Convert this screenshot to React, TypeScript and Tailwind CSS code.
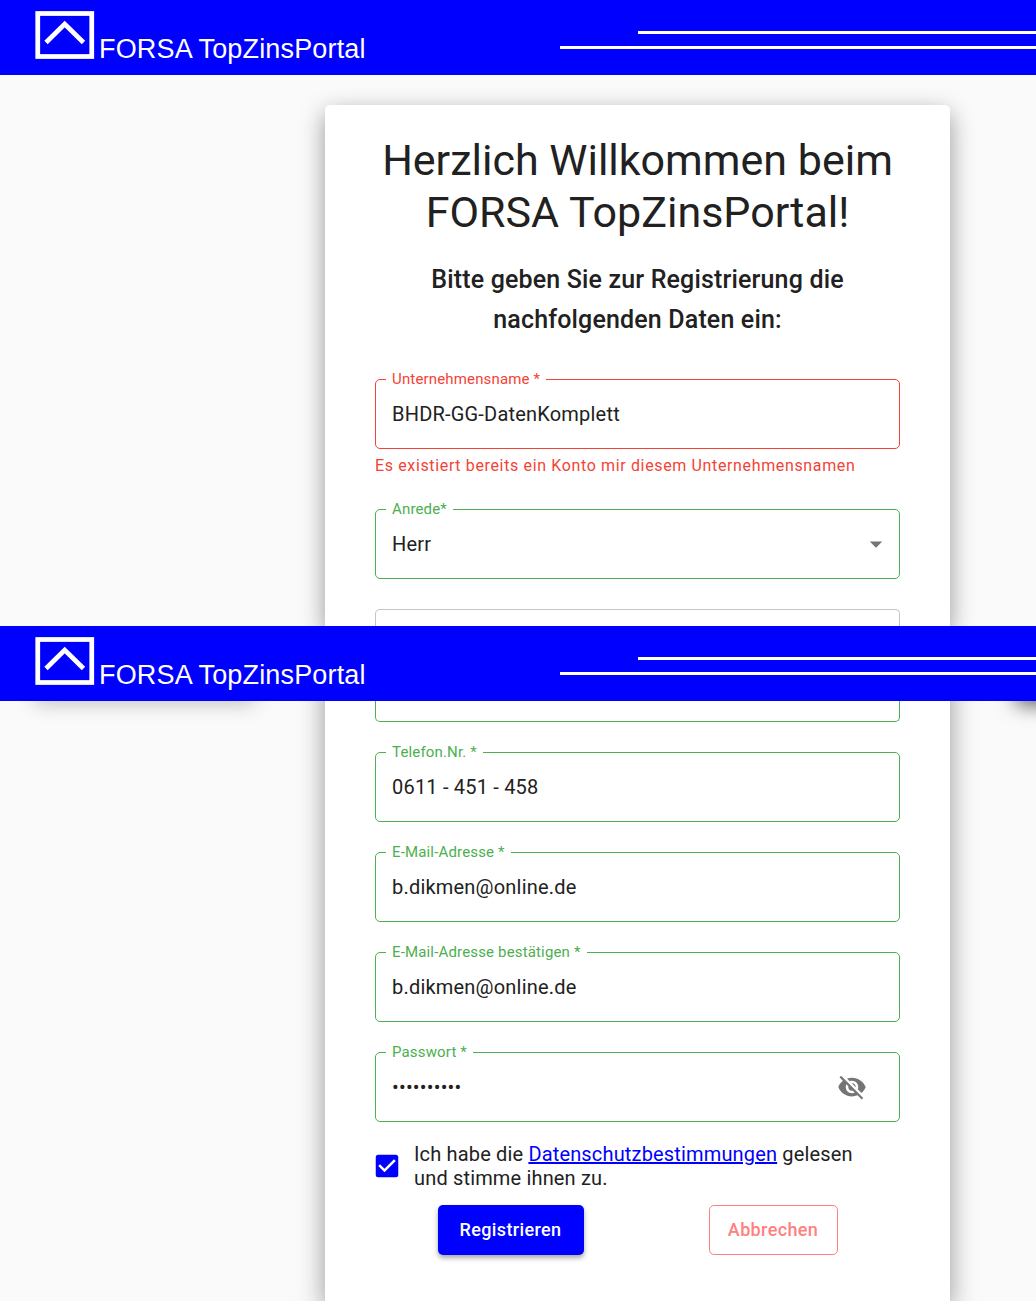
import { useState } from "react";
import type { ReactNode } from "react";
import { MdArrowDropDown, MdCheckBox, MdCheckBoxOutlineBlank, MdVisibility, MdVisibilityOff } from "react-icons/md";

function Header() {
  return (
    <header className="relative z-10 flex h-[75px] items-start justify-between bg-[#0000ff]">
      <div className="flex shrink-0 items-start pt-[11px] pl-[35px]">
        <svg width="60" height="49" viewBox="0 0 60 49" fill="none" stroke="#fff" aria-hidden="true">
          <rect x="2.75" y="2.5" width="54" height="43" strokeWidth="4.75" />
          <path d="M11 31.5 29.7 13 48.5 31.5" strokeWidth="4.75" />
        </svg>
        <span className="mt-[22px] ml-1 font-['Liberation_Sans',sans-serif] text-[27px] leading-8 text-white">
          FORSA TopZinsPortal
        </span>
      </div>
      <div className="flex w-[476px] flex-col items-end gap-3 pt-[31px]" aria-hidden="true">
        <div className="h-[3px] w-[398px] bg-white" />
        <div className="h-[3px] w-full bg-white" />
      </div>
    </header>
  );
}

type FieldProps = { id: string; label: string; invalid?: boolean; children: ReactNode };

function Field({ id, label, invalid = false, children }: FieldProps) {
  const tone = invalid ? "border-[#f44336] text-[#f44336]" : "border-[#4caf50] text-[#4caf50]";
  return (
    <fieldset className={`min-w-0 rounded-[5px] border px-[10px] pb-[9px] ${tone}`}>
      <legend className="px-[6px] text-[15px] leading-5">
        <label htmlFor={id}>{label}</label>
      </legend>
      <div className="relative flex h-[50px] items-center px-[6px] text-xl text-[#212121]">{children}</div>
    </fieldset>
  );
}

const inputStyle = "h-full w-full min-w-0 flex-1 bg-transparent tracking-[0.01em] outline-none";
const cardShadow = "shadow-[0_8px_25px_rgba(0,0,0,0.4)]";

export default function App() {
  const [visible, setVisible] = useState(false);
  const [accepted, setAccepted] = useState(true);

  return (
    <div className="min-h-screen bg-[#fafafa] font-[Roboto,sans-serif] tracking-[0.01em] text-[#212121]">
      <Header />
      <section className="overflow-hidden pt-[30px]">
        <div className={`mr-[86px] ml-[325px] rounded-t-[5px] bg-white px-[50px] pt-[29px] ${cardShadow}`}>
          <h1 className="text-center text-[43px] leading-[52px] tracking-normal">
            Herzlich Willkommen beim <br />
            FORSA TopZinsPortal!
          </h1>
          <h2 className="mt-[22px] px-8 text-center text-[25px] leading-10 font-medium">
            Bitte geben Sie zur Registrierung die nachfolgenden Daten ein:
          </h2>
          <div className="mt-[29px] flex flex-col gap-5">
            <div>
              <Field id="company" label="Unternehmensname *" invalid>
                <input id="company" className={inputStyle} defaultValue="BHDR-GG-DatenKomplett" aria-describedby="company-error" />
              </Field>
              <p id="company-error" className="mt-[7px] mb-[3px] text-base leading-5 tracking-[0.04em] text-[#f44336]">
                Es existiert bereits ein Konto mir diesem Unternehmensnamen
              </p>
            </div>
            <Field id="salutation" label="Anrede*">
              <select id="salutation" defaultValue="Herr" className={`${inputStyle} appearance-none`}>
                <option>Herr</option>
                <option>Frau</option>
              </select>
              <MdArrowDropDown className="pointer-events-none absolute right-[-2px] size-[30px] text-[#757575]" />
            </Field>
            <input aria-label="Vorname" className="mt-[10px] block h-[17px] w-full rounded-t-[5px] border border-b-0 border-[#c4c4c4] px-4" />
          </div>
        </div>
      </section>

      <Header />
      <section className="relative overflow-hidden">
        <div className="absolute -top-5 left-[35px] h-5 w-[220px] shadow-[0_2px_20px_rgba(0,0,0,0.25)]" />
        <div className="absolute -top-5 right-[-40px] h-5 w-[60px] shadow-[0_3px_20px_rgba(0,0,0,0.7)]" />
        <div className={`relative -mt-10 mr-[86px] ml-[325px] bg-white px-[50px] pt-10 pb-[46px] ${cardShadow}`}>
          <div className="flex flex-col gap-5">
            <input aria-label="Nachname" className="block h-[21px] w-full rounded-b-[5px] border border-t-0 border-[#4caf50] px-4" />
            <Field id="phone" label="Telefon.Nr. *">
              <input id="phone" type="tel" className={inputStyle} defaultValue="0611 - 451 - 458" />
            </Field>
            <Field id="email" label="E-Mail-Adresse *">
              <input id="email" type="email" className={inputStyle} defaultValue="b.dikmen@online.de" />
            </Field>
            <Field id="email-confirm" label="E-Mail-Adresse bestätigen *">
              <input id="email-confirm" type="email" className={inputStyle} defaultValue="b.dikmen@online.de" />
            </Field>
            <Field id="password" label="Passwort *">
              <input id="password" type={visible ? "text" : "password"} className={inputStyle} defaultValue="geheim1234" />
              <button type="button" aria-label="Passwort anzeigen" className="mr-4 text-[#757575]" onClick={() => setVisible(!visible)}>
                {visible ? <MdVisibility className="size-[30px]" /> : <MdVisibilityOff className="size-[30px]" />}
              </button>
            </Field>
          </div>
          <div className="mt-5 flex items-center gap-3 text-xl leading-6">
            <span className="relative -ml-[3px] size-[30px] shrink-0">
              <input
                id="privacy"
                type="checkbox"
                checked={accepted}
                onChange={(event) => setAccepted(event.target.checked)}
                className="block size-[30px] appearance-none"
              />
              <span className="pointer-events-none absolute inset-0 text-[#0000ff]">
                {accepted ? <MdCheckBox className="size-[30px]" /> : <MdCheckBoxOutlineBlank className="size-[30px]" />}
              </span>
            </span>
            <label htmlFor="privacy">
              Ich habe die{" "}
              <a href="#datenschutz" className="text-[#0000ff] underline">
                Datenschutzbestimmungen
              </a>{" "}
              gelesen
              <br />
              und stimme ihnen zu.
            </label>
          </div>
          <div className="mt-[15px] flex justify-around">
            <button
              type="button"
              className="h-[50px] w-[146px] rounded-[5px] bg-[#0000ff] text-lg font-medium tracking-[0.02em] text-white shadow-[0_3px_5px_rgba(0,0,0,0.35)]"
            >
              Registrieren
            </button>
            <button
              type="button"
              className="h-[50px] w-[129px] rounded-[5px] border border-[#ff8080] text-lg font-medium tracking-[0.02em] text-[#ff8080]"
            >
              Abbrechen
            </button>
          </div>
        </div>
      </section>
    </div>
  );
}
